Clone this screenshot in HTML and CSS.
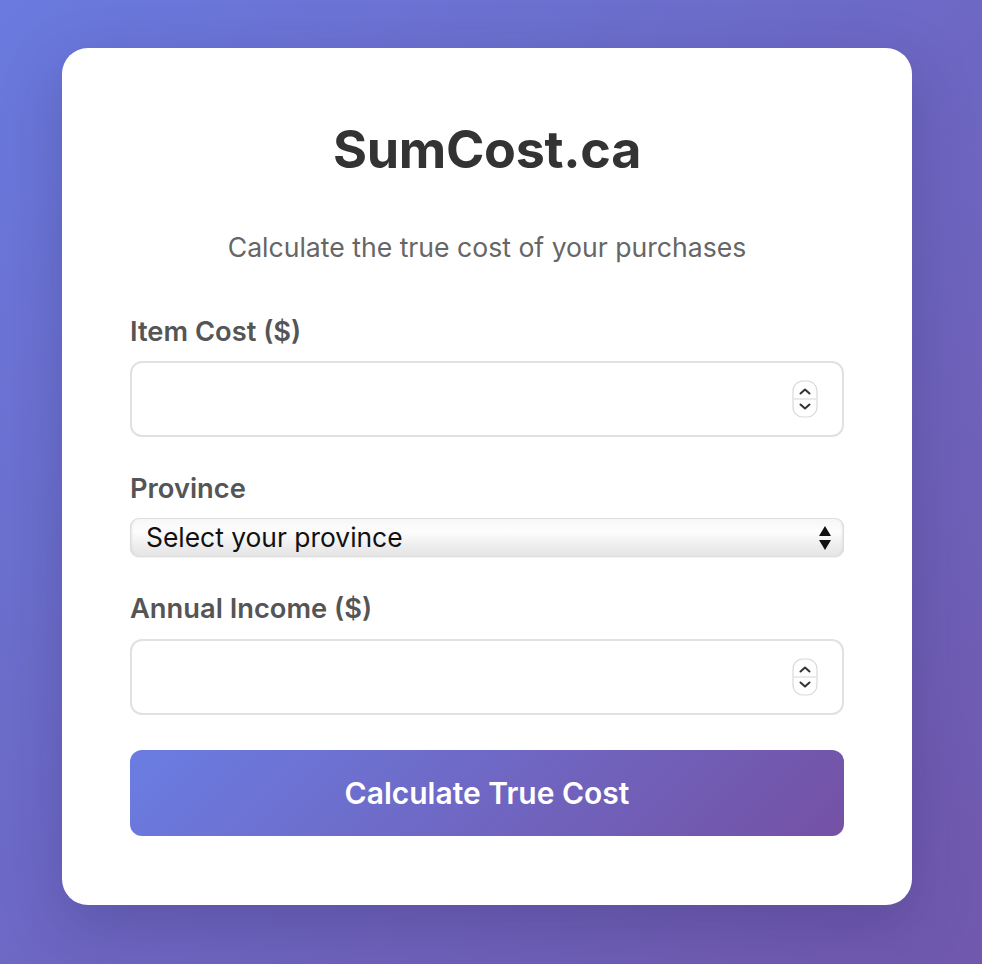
FILE: index.html
```html
<!DOCTYPE html>
<html lang="en">
<head>
<meta charset="utf-8">
<title>SumCost.ca</title>
<link rel="stylesheet" href="styles.css">
</head>
<body>
<main class="page">
  <section class="card">
    <h1 class="title">SumCost.ca</h1>
    <p class="subtitle">Calculate the true cost of your purchases</p>
    <form class="form">
      <div class="group">
        <label class="label" for="cost">Item Cost ($)</label>
        <div class="field">
          <input class="input" id="cost" type="number">
          <span class="spinner" aria-hidden="true">
            <svg width="26" height="38" viewBox="0 0 26 38">
              <rect x="1" y="1" width="24" height="36" rx="10" fill="#fff" stroke="#d9d9d9" stroke-width="1.2"/>
              <line x1="1.5" y1="19" x2="24.5" y2="19" stroke="#dcdcdc" stroke-width="1.2"/>
              <path d="M8.5 13.5 L13 9.5 L17.5 13.5" fill="none" stroke="#333" stroke-width="2" stroke-linecap="round" stroke-linejoin="round"/>
              <path d="M8.5 24.5 L13 28.5 L17.5 24.5" fill="none" stroke="#333" stroke-width="2" stroke-linecap="round" stroke-linejoin="round"/>
            </svg>
          </span>
        </div>
      </div>
      <div class="group">
        <label class="label" for="province">Province</label>
        <div class="select">
          <span class="select-text">Select your province</span>
          <svg class="select-arrows" width="14" height="26" viewBox="0 0 14 26" aria-hidden="true">
            <path d="M7 1 L13 11 L1 11 Z" fill="#111"/>
            <path d="M1 15 L13 15 L7 25 Z" fill="#111"/>
          </svg>
        </div>
      </div>
      <div class="group group-last">
        <label class="label" for="income">Annual Income ($)</label>
        <div class="field">
          <input class="input" id="income" type="number">
          <span class="spinner" aria-hidden="true">
            <svg width="26" height="38" viewBox="0 0 26 38">
              <rect x="1" y="1" width="24" height="36" rx="10" fill="#fff" stroke="#d9d9d9" stroke-width="1.2"/>
              <line x1="1.5" y1="19" x2="24.5" y2="19" stroke="#dcdcdc" stroke-width="1.2"/>
              <path d="M8.5 13.5 L13 9.5 L17.5 13.5" fill="none" stroke="#333" stroke-width="2" stroke-linecap="round" stroke-linejoin="round"/>
              <path d="M8.5 24.5 L13 28.5 L17.5 24.5" fill="none" stroke="#333" stroke-width="2" stroke-linecap="round" stroke-linejoin="round"/>
            </svg>
          </span>
        </div>
      </div>
      <button class="button" type="button">Calculate True Cost</button>
    </form>
  </section>
</main>
</body>
</html>
```

FILE: styles.css
```css
* { box-sizing: border-box; }

html, body {
  margin: 0;
  height: 100%;
}

body {
  background: linear-gradient(135deg, #6a7ade 0%, #6d68c4 50%, #7058ad 100%);
  font-family: Inter, "Noto Sans", "Liberation Sans", sans-serif;
  overflow: hidden;
}

.page {
  display: flex;
  justify-content: center;
  padding: 48px 8px 0 0;
}

.card {
  width: 850px;
  background: #fff;
  border-radius: 26px;
  padding: 68px 68px 69px;
  box-shadow: 0 20px 60px rgba(40, 30, 90, 0.25);
}

.title {
  margin: 0;
  text-align: center;
  font-size: 52px;
  line-height: 68px;
  font-weight: 700;
  color: #333;
  letter-spacing: -0.3px;
}

.subtitle {
  margin: 47px 0 51px;
  text-align: center;
  font-size: 26.6px;
  line-height: 32px;
  color: #666;
}

.form {
  display: flex;
  flex-direction: column;
}

.group {
  display: flex;
  flex-direction: column;
  margin-bottom: 34px;
}

.group-last {
  margin-bottom: 35px;
}

.label {
  display: block;
  font-size: 27.3px;
  line-height: 32px;
  padding-top: 2px;
  font-weight: 600;
  color: #555;
  margin-bottom: 13px;
}

.group-last .label {
  margin-bottom: 14px;
}

.field {
  position: relative;
}

.input {
  display: block;
  width: 100%;
  height: 76px;
  border: 2.5px solid #e1e1e1;
  border-radius: 12px;
  padding: 0 24px;
  font-family: inherit;
  font-size: 30px;
  background: #fff;
  outline: none;
  -moz-appearance: textfield;
}

.input::-webkit-inner-spin-button,
.input::-webkit-outer-spin-button {
  -webkit-appearance: none;
  margin: 0;
}

.spinner {
  position: absolute;
  right: 26px;
  top: 19px;
  display: flex;
}

.select {
  display: flex;
  align-items: center;
  justify-content: space-between;
  height: 39px;
  padding: 0 12px 0 16px;
  border-radius: 9px;
  background: linear-gradient(180deg, #f6f6f6 0%, #fdfdfd 35%, #ececec 75%, #e4e4e4 100%);
  box-shadow: inset 0 0 0 1px #dedede, inset 3px 0 3px -2px #cfcfcf, inset -3px 0 3px -2px #cfcfcf, 0 1px 1px rgba(0,0,0,0.05);
}

.select-text {
  font-family: Inter, "Noto Sans", "Liberation Sans", sans-serif;
  font-size: 26.4px;
  line-height: 39px;
  color: #111;
}

.select-arrows {
  display: block;
}

.button {
  display: block;
  width: 100%;
  height: 86px;
  border: none;
  border-radius: 12px;
  background: linear-gradient(135deg, #6a7de2 0%, #7451a4 100%);
  color: #fff;
  font-family: inherit;
  font-size: 30px;
  font-weight: 600;
  cursor: pointer;
}
```
